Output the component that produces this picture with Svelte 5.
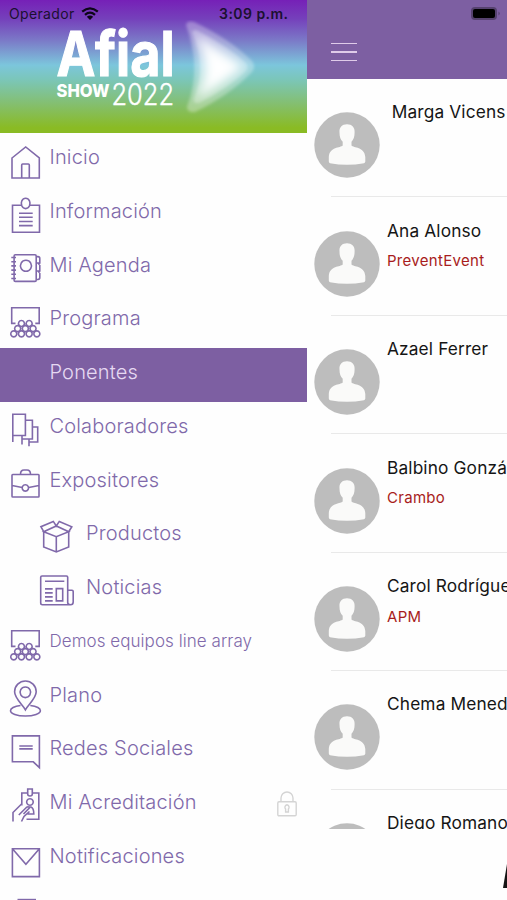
<script>
	const menu = [
		{ label: 'Inicio', icon: 'home' },
		{ label: 'Información', icon: 'info' },
		{ label: 'Mi Agenda', icon: 'agenda' },
		{ label: 'Programa', icon: 'program' },
		{ label: 'Ponentes', icon: '', active: true },
		{ label: 'Colaboradores', icon: 'flags' },
		{ label: 'Expositores', icon: 'case' },
		{ label: 'Productos', icon: 'box', sub: true },
		{ label: 'Noticias', icon: 'news', sub: true },
		{ label: 'Demos equipos line array', icon: 'program', small: true },
		{ label: 'Plano', icon: 'map' },
		{ label: 'Redes Sociales', icon: 'chat' },
		{ label: 'Mi Acreditación', icon: 'badge', locked: true },
		{ label: 'Notificaciones', icon: 'mail' },
		{ label: '', icon: 'more' }
	];

	const icons = {
		home: 'M4 14 L17.7 3 L31.3 14 V34 H4 Z M13.7 34 V21 Q13.7 20 14.7 20 H20.3 Q21.3 20 21.3 21 V34',
		info: 'M13.5 7.3 H4.5 V34.3 H31.5 V7.3 H22 M17.7 .2 A4.4 5.2 0 1 1 17.6 .2 Z M11 15.2 H24.7 M11 19.3 H24.7 M11 23.5 H24.7 M11 27.6 H24.7',
		agenda: 'M7.3 2.8 H27 Q28.2 2.8 28.2 4 V28.2 Q28.2 29.4 27 29.4 H7.3 Q6.1 29.4 6.1 28.2 V4 Q6.1 2.8 7.3 2.8 Z M18 8.3 A5.5 5.5 0 1 1 17.9 8.3 Z M3.3 5.5 H8 M3.3 9.7 H8 M3.3 13.9 H8 M3.3 18.1 H8 M3.3 22.3 H8 M3.3 26.5 H8 M28.2 4.6 H30 Q31.8 4.6 31.8 6.5 V11 H28.2 M31.8 13 V19 H28.2 M31.8 21 V25.6 Q31.8 27.5 30 27.5 H28.2 M31.8 11 L30.8 12 L31.8 13 M31.8 19 L30.8 20 L31.8 21',
		program: 'M7.5 18.4 H3.7 V2.7 H31.2 V18.4 H27.3 M13.5 15.5 A3 3 0 1 1 13.4 15.5 Z M21.2 15.5 A3 3 0 1 1 21.1 15.5 Z M9.7 20.6 A3 3 0 1 1 9.6 20.6 Z M17.4 20.6 A3 3 0 1 1 17.3 20.6 Z M25.1 20.6 A3 3 0 1 1 25 20.6 Z M5.8 25.9 A3 3 0 1 1 5.7 25.9 Z M13.5 25.9 A3 3 0 1 1 13.4 25.9 Z M21.2 25.9 A3 3 0 1 1 21.1 25.9 Z M28.9 25.9 A3 3 0 1 1 28.8 25.9 Z',
		flags: 'M4.8 29 V1.2 H17.4 V22.5 H4.8 M17.4 7.2 H24.4 V26 H14 V31.4 M14 22.5 V26 M24.4 14 H29.7 V29 H21 V33.3 M21 26 V29',
		case: 'M4.8 7.5 H30.3 Q31 7.5 31 8.2 V29.2 Q31 30 30.3 30 H4.8 Q4 30 4 29.2 V8.2 Q4 7.5 4.8 7.5 Z M12.5 7.3 Q12.5 3 16 3 H19 Q22.5 3 22.5 7.3 M4 18.5 L14.2 20.5 M31 18.5 L20.7 20.5 M17.4 17.7 A3.2 3.2 0 1 1 17.3 17.7 Z',
		box: 'M5.7 12 V27 L18.3 32 L30.7 27 V12 M18.3 16.7 V32 M5.7 11.7 L18.3 16.7 L30.7 11.7 L18.3 6 Z M5.7 11.7 L2.9 6.7 L15.3 1.4 L18.3 6 L21.3 1.4 L33.8 6.8 L30.7 11.7',
		news: 'M4 2 H28.5 Q29.7 2 29.7 3.2 V28.5 Q29.7 30.7 32.5 30.7 H4.5 Q2.7 30.7 2.7 29 V3.3 Q2.7 2 4 2 Z M29.7 16.3 H34 Q35.2 16.3 35.2 17.5 V28 Q35.2 30.7 32.5 30.7 M7 7.3 H26.3 M7 14.9 H14.7 M7 18.9 H14.7 M7 22.9 H14.7 M7 26.9 H14.7 M18.3 14.6 H24.7 V26.9 H18.3 Z',
		map: 'M17.4 27.8 C15 23 6.6 16.5 6.6 9.8 A10.8 10.8 0 0 1 28.2 9.8 C28.2 16.5 19.8 23 17.4 27.8 Z M17.4 5 A5.3 5.3 0 1 1 17.3 5 Z M12.5 23.5 C6 24 2.5 26.5 2.5 28.7 C2.5 31.5 9 34 17.4 34 S32.4 31.5 32.4 28.7 C32.4 26.5 29 24 22.3 23.5',
		chat: 'M4.4 .9 H31.4 V32.6 L25.3 26.8 H4.4 Z M11.3 11 H24.7 M11.3 13.9 H24.7',
		badge: 'M19.7 4 H13.8 V16.5 M24.3 4 H30.8 V30.3 H18.5 M19.7 0 H24.3 V5 Q24.3 7 22 7 Q19.7 7 19.7 5 Z M22 9.7 A3.3 3.3 0 1 1 21.9 9.7 Z M5 32.5 V23.5 L13.8 14.8 M13.5 32.5 L16 27.5 L21.5 22.5 M10.8 26 L18.3 18.5 Q20.5 17 21.5 18.8 L15.5 25 M21 18 H23 Q25.8 19 25.8 25 H19.5',
		mail: 'M4.4 5.8 H31.4 V33.6 H4.4 Z M4.4 5.8 L17.9 21.2 L31.4 5.8',
		more: 'M9.5 2.6 H28'
	};

	const speakers = [
		{ name: 'Marga Vicens', indent: true },
		{ name: 'Ana Alonso', company: 'PreventEvent' },
		{ name: 'Azael Ferrer' },
		{ name: 'Balbino González', company: 'Crambo' },
		{ name: 'Carol Rodríguez', company: 'APM' },
		{ name: 'Chema Menedez' },
		{ name: 'Diego Romano' }
	];
</script>

<div class="app">
	<nav class="drawer">
		<header class="banner">
			<div class="status">
				<span class="carrier">Operador</span>
				<svg class="wifi" viewBox="0 0 18 13">
					<path d="M1.2 4.7 Q9 -2 16.8 4.7" />
					<path d="M4 7.8 Q9 3.5 14 7.8" />
					<path class="dot" d="M5.8 9.7 Q9 7.2 12.2 9.7 L9 13 Z" />
				</svg>
				<span class="time">3:09 p.m.</span>
			</div>
			<svg class="logo" viewBox="0 0 306 112">
				<defs>
					<filter id="glow" x="-20%" y="-20%" width="140%" height="140%">
						<feGaussianBlur stdDeviation="1.8" />
					</filter>
					<filter id="core" x="-40%" y="-40%" width="180%" height="180%">
						<feGaussianBlur stdDeviation="4" />
					</filter>
				</defs>
				<text class="brand" x="56.5" y="55.5" textLength="118" lengthAdjust="spacingAndGlyphs">Afial</text>
				<text class="show" x="56.5" y="76.5" textLength="53" lengthAdjust="spacingAndGlyphs">SHOW</text>
				<text class="year" x="111.5" y="85" textLength="62.5" lengthAdjust="spacingAndGlyphs">2022</text>
				<g filter="url(#glow)">
					<path opacity=".3" d="M186 5 Q187 0 194 2 Q230 19 252 41 Q256 47 252 52 Q230 75 195 92 Q187 93 187 87 Q202 48 186 5 Z" />
					<path opacity=".3" d="M192 12 Q194 8 200 12 Q230 28 246 43 Q249 47 246 51 Q230 67 199 83 Q192 84 194 78 Q207 48 192 12 Z" />
				</g>
				<g filter="url(#core)">
					<path opacity=".7" d="M197 19 Q201 16 206 21 Q228 34 240 44 Q242 47 240 50 Q226 62 204 75 Q197 77 199 71 Q210 47 197 19 Z" />
					<path d="M204 27 Q224 38 236 47 Q224 58 206 68 Q213 48 204 27 Z" />
				</g>
			</svg>
		</header>
		<ul class="menu">
			{#each menu as item}
				<li class:active={item.active} class:sub={item.sub} class:small={item.small}>
					<svg class="icon" viewBox="0 0 36 36">
						{#if item.icon}<path d={icons[item.icon]} />{/if}
					</svg>
					<span class="label">{item.label}</span>
					{#if item.locked}
						<svg class="lock" viewBox="0 0 20 26">
							<path d="M2 10.8 H18 Q19.2 10.8 19.2 12 V23.5 Q19.2 24.7 18 24.7 H2 Q.8 24.7 .8 23.5 V12 Q.8 10.8 2 10.8 Z M4 10.8 V7 A6 6 0 0 1 16 7 V10.8 M10 13.8 A2.5 2.5 0 0 1 11.4 18 V21 H8.6 V18 A2.5 2.5 0 0 1 10 13.8 Z" />
						</svg>
					{/if}
				</li>
			{/each}
		</ul>
	</nav>

	<main class="page">
		<header class="topbar">
			<svg class="battery" viewBox="0 0 32 16">
				<rect class="shell" x="1" y="1" width="26" height="13" rx="4" />
				<rect x="3" y="3" width="22" height="9" rx="2" />
				<path class="cap" d="M28.5 5.5 Q31 7.5 28.5 9.5 Z" />
			</svg>
			<div class="burger"><i></i><i></i><i></i></div>
		</header>
		<div class="list">
			{#each speakers as s}
				<div class="speaker">
					<svg class="avatar" viewBox="0 0 66 66">
						<circle cx="33" cy="33" r="32.7" />
						<path d="M33 12.3 C38 12.3 41 15.5 40.6 20.5 C40.6 25 39.5 27.5 37.5 29.8 V33.5 C39.5 36 50.5 34.5 51.3 45 V49.5 Q51.3 50.8 50 51.2 Q33 54.5 16 51.2 Q14.8 50.8 14.8 49.5 V45 C15.5 34.5 26.5 36 28.7 33.5 V29.8 C26.5 27.5 25.5 25 25.5 20.5 C25 15.5 28 12.3 33 12.3 Z" />
					</svg>
					<div class="who" class:indent={s.indent}>
						<div class="name">{s.name}</div>
						{#if s.company}<div class="company">{s.company}</div>{/if}
					</div>
				</div>
			{/each}
		</div>
		<footer class="ad">
			<svg viewBox="0 0 4 24"><path d="M4 0 L0 24 H4 Z" /></svg>
		</footer>
	</main>
</div>

<style>
	:global(body) {
		margin: 0;
		background: #fff;
	}
	.app {
		display: flex;
		width: 507px;
		height: 900px;
		overflow: hidden;
		background: #fefefe;
		font-family: Inter, "Liberation Sans", sans-serif;
	}
	.drawer {
		flex: 0 0 306.5px;
		height: 900px;
		overflow: hidden;
	}
	.banner {
		height: 132.7px;
		background: linear-gradient(#7620b7 0%, #7540bb 14%, #7b78c7 30%, #7cc6dc 49%, #7bc6b8 60%, #84bf70 78%, #8abb24 96%);
	}
	.status {
		display: flex;
		align-items: center;
		height: 24px;
		padding: 3px 18px 0 9px;
		box-sizing: border-box;
		font-size: 14px;
		color: #1b1030;
	}
	.carrier {
		letter-spacing: 0.35px;
	}
	.wifi {
		width: 18px;
		height: 13px;
		margin-left: 6px;
		fill: none;
		stroke: #0c0618;
		stroke-width: 2.3;
	}
	.wifi .dot {
		fill: #0c0618;
		stroke: none;
	}
	.time {
		margin-left: auto;
		font-weight: 600;
		letter-spacing: 0.45px;
	}
	.logo {
		display: block;
		width: 306px;
		height: 112px;
		margin-top: -4px;
		fill: #fff;
	}
	.brand {
		font-size: 61.5px;
		font-weight: 700;
		stroke: #fff;
		stroke-width: 1.2;
	}
	.show {
		font-size: 17.5px;
		font-weight: 800;
	}
	.year {
		font-size: 30px;
		font-weight: 300;
		stroke: #fff;
		stroke-width: 0.4;
	}
	.menu {
		margin: 0;
		padding: 0;
		list-style: none;
	}
	.menu li {
		display: flex;
		align-items: flex-start;
		height: 53.77px;
		padding: 0 10px 0 8px;
		box-sizing: border-box;
		color: #8069aa;
	}
	.menu li.sub {
		padding-left: 38px;
	}
	.menu li.active {
		background: #7d5fa2;
		color: #e6d9f2;
	}
	.icon {
		flex: none;
		width: 36px;
		height: 36px;
		margin-top: 11.3px;
		overflow: visible;
		fill: none;
		stroke: #8069aa;
		stroke-width: 1.6;
	}
	.label {
		margin: 11.3px 0 0 5.5px;
		font-size: 20px;
		line-height: 26px;
		font-weight: 300;
		letter-spacing: 0.17px;
		white-space: nowrap;
	}
	.sub .label {
		margin-left: 12px;
	}
	.small .label {
		font-size: 17px;
		letter-spacing: 0.05px;
	}
	.lock {
		width: 20px;
		height: 26px;
		margin: 13px 0 0 auto;
		fill: none;
		stroke: #d4d4d4;
		stroke-width: 1.4;
	}
	.page {
		flex: 1;
		min-width: 0;
		overflow: hidden;
	}
	.topbar {
		display: flex;
		flex-direction: column;
		height: 79.2px;
		background: #7d5fa2;
	}
	.battery {
		align-self: flex-end;
		width: 32px;
		height: 16px;
		margin: 5.5px 5px 0 0;
		fill: #000;
	}
	.battery .shell {
		fill: #56426f;
	}
	.battery .cap {
		fill: #56426f;
	}
	.burger {
		display: flex;
		flex-direction: column;
		gap: 7px;
		margin: 21.3px 0 0 24.5px;
	}
	.burger i {
		width: 26px;
		height: 1.5px;
		background: #dfcbe9;
	}
	.list {
		height: 749.8px;
		overflow: hidden;
	}
	.speaker {
		display: flex;
		height: 118.45px;
		box-sizing: border-box;
		padding-left: 7.2px;
		background: linear-gradient(#e9e9e9, #e9e9e9) 24.5px 100% / 200px 1.3px no-repeat;
	}
	.avatar {
		flex: none;
		width: 66px;
		height: 66px;
		margin-top: 33px;
		fill: #fafaf9;
	}
	.avatar circle {
		fill: #bdbdbd;
	}
	.who {
		margin: 21px 0 0 7.3px;
		white-space: nowrap;
	}
	.who.indent {
		margin-left: 12px;
	}
	.name {
		font-size: 17.3px;
		line-height: 24px;
		letter-spacing: 0.15px;
		color: #151515;
	}
	.company {
		margin-top: 8.8px;
		font-size: 15px;
		line-height: 20px;
		letter-spacing: 0.3px;
		color: #a81c20;
	}
	.ad {
		display: flex;
		justify-content: flex-end;
		padding-top: 35px;
	}
	.ad svg {
		width: 4px;
		height: 24px;
		fill: #151515;
	}
</style>
